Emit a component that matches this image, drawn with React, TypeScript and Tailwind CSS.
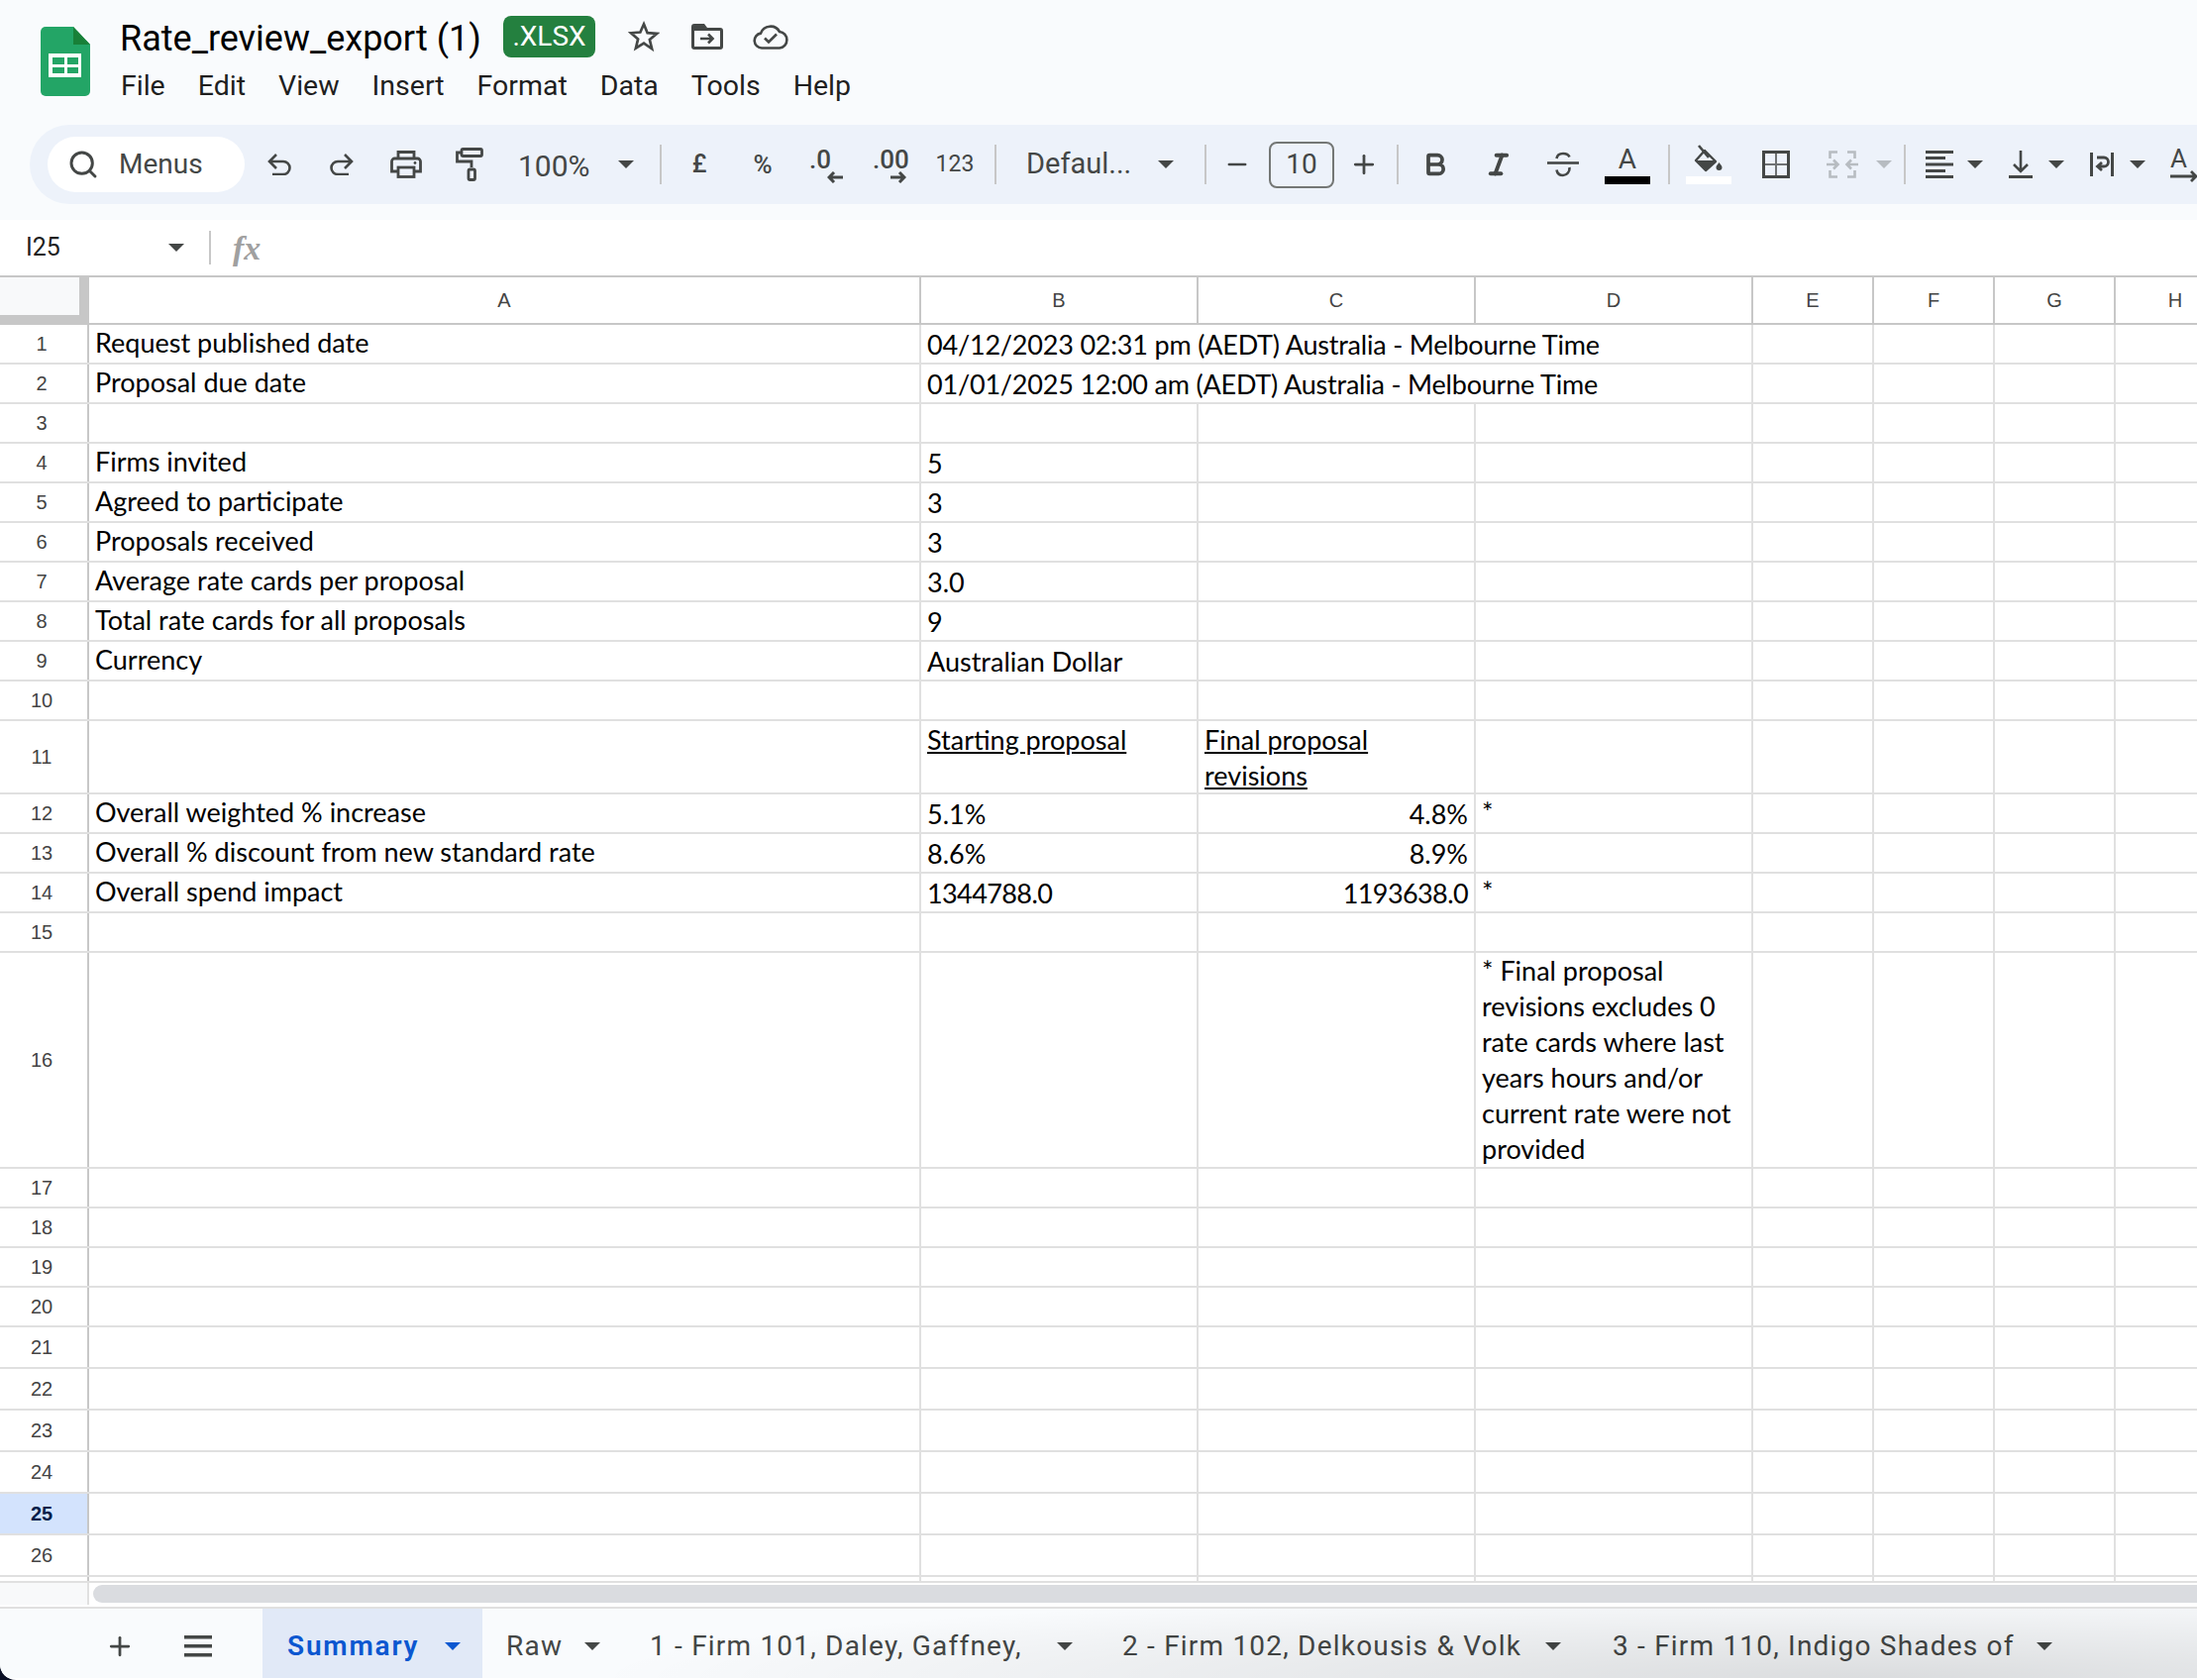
import React from 'react';
import { Bold, Italic, Minus, Plus, Search } from 'lucide-react';

const INK = '#444746';

const Caret = ({ color = INK }: { color?: string }) => (
  <svg width="16" height="8" viewBox="0 0 16 8" className="shrink-0">
    <path d="M0 0h16L8 8z" fill={color} />
  </svg>
);

const Sep = ({ className = '' }: { className?: string }) => (
  <div className={`w-[2px] h-[40px] bg-[#c7c7c7] shrink-0 ${className}`} />
);

const SheetsLogo = () => (
  <svg width="50" height="70" viewBox="0 0 50 70" className="shrink-0">
    <path d="M5 0H33L50 18V65a5 5 0 0 1-5 5H5a5 5 0 0 1-5-5V5a5 5 0 0 1 5-5z" fill="#23a566" />
    <path d="M33 0L50 18H33z" fill="#188038" />
    <rect x="8" y="27" width="33" height="24" fill="#fff" />
    <rect x="12" y="31" width="12" height="7" fill="#23a566" />
    <rect x="27" y="31" width="11" height="7" fill="#23a566" />
    <rect x="12" y="41" width="12" height="6" fill="#23a566" />
    <rect x="27" y="41" width="11" height="6" fill="#23a566" />
  </svg>
);

const StarIcon = () => (
  <svg width="32" height="32" viewBox="0 0 24 24" fill="none" stroke={INK} strokeWidth="2">
    <path d="M12 2.5l2.7 6.6 7.1.6-5.4 4.6 1.7 6.9L12 17l-6.1 3.7 1.7-6.9-5.4-4.6 7.1-.6z" />
  </svg>
);

const FolderIcon = () => (
  <svg width="32" height="26" viewBox="0 0 32 26">
    <path d="M3 0h10l3 4h13a3 3 0 0 1 3 3v16a3 3 0 0 1-3 3H3a3 3 0 0 1-3-3V3a3 3 0 0 1 3-3z" fill={INK} />
    <rect x="3" y="7" width="26" height="16" fill="#f9fbfd" />
    <path d="M9 15h12M17 10.5l4.5 4.5-4.5 4.5" fill="none" stroke={INK} strokeWidth="2.6" />
  </svg>
);

const CloudIcon = () => (
  <svg width="36" height="26" viewBox="0 0 36 26" fill="none" stroke={INK} strokeWidth="2.6">
    <path d="M9 24.5a7.5 7.5 0 0 1-1-14.9A10.5 10.5 0 0 1 27 8a8.3 8.3 0 0 1 0 16.5z" />
    <path d="M12 14.5l4 4 8-8" />
  </svg>
);

const UndoIcon = ({ flip = false }: { flip?: boolean }) => (
  <svg width="24" height="22" viewBox="0 0 24 22" fill="none" stroke={INK} strokeWidth="2.6" className={flip ? '-scale-x-100' : ''}>
    <path d="M9 1L2 8l7 7M2 8h14a6.5 6.5 0 0 1 0 13H5" />
  </svg>
);

const PrintIcon = () => (
  <svg width="32" height="28" viewBox="0 0 32 28" fill="none" stroke={INK} strokeWidth="2.8">
    <path d="M8 8V1.5h16V8M8 21H1.5V11a3 3 0 0 1 3-3h23a3 3 0 0 1 3 3v10H24" />
    <rect x="8" y="17" width="16" height="9.5" />
    <circle cx="25" cy="12.5" r="1.4" fill={INK} stroke="none" />
  </svg>
);

const RollerIcon = () => (
  <svg width="28" height="34" viewBox="0 0 28 34" fill="none" stroke={INK} strokeWidth="2.8">
    <rect x="6" y="1.5" width="20.5" height="7" rx="1.5" />
    <path d="M6 5H1.5v9H16v6" />
    <rect x="13" y="22" width="6.5" height="10.5" rx="1.5" />
  </svg>
);

const SmallArrow = ({ left = false }: { left?: boolean }) => (
  <svg width="16" height="12" viewBox="0 0 16 12" fill="none" stroke={INK} strokeWidth="3" className={left ? '-scale-x-100' : ''}>
    <path d="M0 6h14M9 1l5 5-5 5" />
  </svg>
);

const StrikeIcon = () => (
  <svg width="32" height="26" viewBox="0 0 32 26" fill="none" stroke={INK} strokeWidth="2.6">
    <path d="M0 11.5h32" />
    <path d="M9.5 7c.5-3.5 3.500-5 6.500-5s5.500 1 6.500 3.500M22.500 16c.5 4-2.500 8-6.500 8s-6-2.500-6.500-5.500" />
  </svg>
);

const FillIcon = () => (
  <svg width="30" height="30" viewBox="0 0 30 30">
    <path d="M5 1l10 12" fill="none" stroke={INK} strokeWidth="2.6" />
    <path d="M2 16L11 6l11 11-10 9z" fill="none" stroke={INK} strokeWidth="2.4" strokeLinejoin="round" />
    <path d="M2 16h20L12 26z" fill={INK} />
    <path d="M25.500 18c1.500 2 3 3.500 3 5a3 3 0 0 1-6 0c0-1.500 1.500-3 3-5z" fill={INK} />
  </svg>
);

const BordersIcon = () => (
  <svg width="28" height="28" viewBox="0 0 28 28" fill="none" stroke={INK}>
    <path d="M14 2v24M2 14h24" strokeWidth="2" opacity="0.75" />
    <rect x="1.500" y="1.500" width="25" height="25" strokeWidth="3" />
  </svg>
);

const MergeIcon = () => (
  <svg width="32" height="28" viewBox="0 0 32 28" fill="none" stroke="#b7bcc1" strokeWidth="2.6">
    <path d="M11 1.500H3.500V8M3.500 20v6.500H11M21 1.500h7.500V8M28.500 20v6.500H21" />
    <path d="M0 14h11M7 9.500l4.500 4.500L7 18.500M32 14H21M25 9.500L20.500 14l4.500 4.500" />
  </svg>
);

const AlignIcon = () => (
  <svg width="28" height="28" viewBox="0 0 28 28" fill={INK}>
    <rect width="28" height="3" />
    <rect y="6" width="20" height="3" />
    <rect y="12.500" width="28" height="3" />
    <rect y="19" width="20" height="3" />
    <rect y="25" width="28" height="3" />
  </svg>
);

const VAlignIcon = () => (
  <svg width="24" height="28" viewBox="0 0 24 28" fill="none" stroke={INK} strokeWidth="2.6">
    <path d="M12 0v21M5 14l7 7 7-7" />
    <path d="M0 26.500h24" strokeWidth="3" />
  </svg>
);

const WrapIcon = () => (
  <svg width="24" height="24" viewBox="0 0 24 24" fill="none" stroke={INK}>
    <path d="M1.500 0v24M22.500 0v24" strokeWidth="3" />
    <path d="M7 5h7a4 4 0 0 1 0 9H8M12 10l-4.500 4 4.500 4" strokeWidth="2.800" />
  </svg>
);

const Toolbar = () => (
  <div className="h-[80px] ml-[30px] pl-[18px] bg-[#edf2fa] rounded-l-[40px] flex items-center text-[#444746] font-['Roboto',sans-serif] whitespace-nowrap">
    <div className="w-[199px] h-[56px] bg-white rounded-[28px] flex items-center pl-[20px] shrink-0">
      <Search size={32} strokeWidth={2.2} color={INK} className="shrink-0" />
      <span className="ml-[20px] text-[28px]">Menus</span>
    </div>
    <div className="w-[64px] ml-[3px] flex justify-center shrink-0"><UndoIcon /></div>
    <div className="w-[62px] flex justify-center shrink-0"><UndoIcon flip /></div>
    <div className="w-[68px] flex justify-center shrink-0"><PrintIcon /></div>
    <div className="w-[60px] flex justify-center shrink-0"><RollerIcon /></div>
    <span className="w-[74px] ml-[19px] text-[30px] pt-[2px] shrink-0">100%</span>
    <div className="w-[70px] flex justify-center shrink-0"><Caret /></div>
    <Sep className="-ml-[1px]" />
    <div className="w-[76px] text-center text-[25px] font-medium shrink-0">£</div>
    <div className="w-[52px] text-center text-[26px] font-medium shrink-0">%</div>
    <div className="w-[74px] pl-[21px] shrink-0">
      <div className="w-[34px] flex flex-col">
        <span className="text-[26px] leading-[26px] font-medium">.0</span>
        <div className="self-end -mt-[1px]"><SmallArrow left /></div>
      </div>
    </div>
    <div className="w-[56px] pl-[11px] shrink-0">
      <div className="w-[34px] flex flex-col">
        <span className="text-[26px] leading-[26px] font-medium">.00</span>
        <div className="self-end -mt-[1px]"><SmallArrow /></div>
      </div>
    </div>
    <div className="w-[76px] text-center text-[23px] shrink-0">123</div>
    <Sep className="ml-[2px]" />
    <span className="w-[107px] ml-[30px] text-[29px] shrink-0">Defaul...</span>
    <div className="w-[68px] flex justify-center shrink-0"><Caret /></div>
    <Sep className="ml-[5px]" />
    <div className="w-[62px] flex justify-center shrink-0"><Minus size={28} strokeWidth={2.2} color={INK} /></div>
    <div className="w-[66px] h-[47px] ml-[1px] border-2 border-[#747775] rounded-[8px] flex items-center justify-center text-[28px] shrink-0">10</div>
    <div className="w-[60px] flex justify-center shrink-0"><Plus size={30} strokeWidth={2.2} color={INK} /></div>
    <Sep className="ml-[3px]" />
    <div className="w-[74px] flex justify-center shrink-0"><Bold size={28} strokeWidth={3.2} color={INK} /></div>
    <div className="w-[54px] flex justify-center shrink-0"><Italic size={28} strokeWidth={3.4} color={INK} /></div>
    <div className="w-[76px] flex justify-center shrink-0"><StrikeIcon /></div>
    <div className="w-[54px] flex flex-col items-center shrink-0">
      <span className="text-[28px] leading-[30px]">A</span>
      <div className="w-[46px] h-[8px] bg-black mt-[2px]" />
    </div>
    <Sep className="ml-[14px]" />
    <div className="w-[78px] flex flex-col items-center shrink-0">
      <FillIcon />
      <div className="w-[46px] h-[8px] bg-white mt-[2px]" />
    </div>
    <div className="w-[58px] flex justify-center shrink-0"><BordersIcon /></div>
    <div className="w-[68px] ml-[4px] flex justify-center shrink-0"><MergeIcon /></div>
    <Caret color="#b7bcc1" />
    <Sep className="ml-[12px]" />
    <div className="w-[40px] ml-[14px] flex justify-center shrink-0"><AlignIcon /></div>
    <div className="ml-[8px] shrink-0"><Caret /></div>
    <div className="w-[40px] ml-[18px] flex justify-center shrink-0"><VAlignIcon /></div>
    <div className="ml-[8px] shrink-0"><Caret /></div>
    <div className="w-[40px] ml-[18px] flex justify-center shrink-0"><WrapIcon /></div>
    <div className="ml-[8px] shrink-0"><Caret /></div>
    <div className="ml-[25px] flex flex-col shrink-0 w-[28px]">
      <span className="text-[26px] leading-[24px]">A</span>
      <svg width="28" height="12" viewBox="0 0 28 12" fill="none" stroke={INK} strokeWidth="2.8">
        <path d="M0 6h26M21 1l5 5-5 5" />
      </svg>
    </div>
  </div>
);

const columns = [
  { name: 'A', width: 'w-[840px]' },
  { name: 'B', width: 'w-[280px]' },
  { name: 'C', width: 'w-[280px]' },
  { name: 'D', width: 'w-[280px]' },
  { name: 'E', width: 'w-[122px]' },
  { name: 'F', width: 'w-[122px]' },
  { name: 'G', width: 'w-[122px]' },
  { name: 'H', width: 'w-[122px]' },
];

interface RowData {
  n: number;
  h?: string;
  a?: string;
  b?: React.ReactNode;
  c?: React.ReactNode;
  d?: React.ReactNode;
  cRight?: boolean;
  span?: boolean;
}

const rows: RowData[] = [
  { n: 1, a: 'Request published date', b: <span className="tracking-[-0.2px]">04/12/2023 02:31 pm (AEDT) Australia - Melbourne Time</span>, span: true },
  { n: 2, a: 'Proposal due date', b: <span className="tracking-[-0.2px]">01/01/2025 12:00 am (AEDT) Australia - Melbourne Time</span>, span: true },
  { n: 3 },
  { n: 4, a: 'Firms invited', b: '5' },
  { n: 5, a: 'Agreed to participate', b: '3' },
  { n: 6, a: 'Proposals received', b: '3' },
  { n: 7, a: 'Average rate cards per proposal', b: '3.0' },
  { n: 8, a: 'Total rate cards for all proposals', b: '9' },
  { n: 9, a: 'Currency', b: 'Australian Dollar' },
  { n: 10 },
  {
    n: 11,
    h: 'h-[74px]',
    b: <span className="underline underline-offset-2">Starting proposal</span>,
    c: <span className="underline underline-offset-2">Final proposal<br />revisions</span>,
  },
  { n: 12, a: 'Overall weighted % increase', b: '5.1%', c: '4.8%', cRight: true, d: '*' },
  { n: 13, a: 'Overall % discount from new standard rate', b: '8.6%', c: '8.9%', cRight: true },
  {
    n: 14,
    a: 'Overall spend impact',
    b: <span className="tracking-[-0.6px]">1344788.0</span>,
    c: <span className="tracking-[-0.6px]">1193638.0</span>,
    cRight: true,
    d: '*',
  },
  { n: 15 },
  {
    n: 16,
    h: 'h-[218px]',
    d: (
      <>
        * Final proposal<br />
        revisions excludes 0<br />
        rate cards where last<br />
        years hours and/or<br />
        current rate were not<br />
        provided
      </>
    ),
  },
  { n: 17 },
  { n: 18 },
  { n: 19 },
  { n: 20 },
  { n: 21, h: 'h-[42px]' },
  { n: 22, h: 'h-[42px]' },
  { n: 23, h: 'h-[42px]' },
  { n: 24, h: 'h-[42px]' },
  { n: 25, h: 'h-[42px]' },
  { n: 26, h: 'h-[42px]' },
];

const cellFont = "font-['Lato',sans-serif] text-[27px] leading-[36px] text-black whitespace-nowrap";

const GridRow = ({ row }: { row: RowData }) => {
  const active = row.n === 25;
  const numericPad = row.n === 11 ? 'pt-[1px]' : 'pt-[2px]';
  return (
    <div className={`flex shrink-0 border-b-2 border-[#e0e0e0] ${row.h ?? 'h-[40px]'}`}>
      <div
        className={`w-[90px] shrink-0 border-r-2 border-[#c7c7c7] flex items-center justify-center pr-[4px] pb-[1px] font-['Liberation_Sans',sans-serif] text-[20px] ${
          active ? 'bg-[#d3e3fd] font-bold text-[#041e49]' : 'text-[#444]'
        }`}
      >
        {row.n}
      </div>
      <div className={`w-[840px] shrink-0 border-r-2 border-[#e0e0e0] pl-[6px] ${cellFont}`}>{row.a}</div>
      <div className={`w-[280px] shrink-0 pl-[6px] ${numericPad} ${row.span ? '' : 'border-r-2 border-[#e0e0e0]'} ${cellFont}`}>{row.b}</div>
      <div className={`w-[280px] shrink-0 pl-[6px] pr-[6px] ${numericPad} ${row.span ? '' : 'border-r-2 border-[#e0e0e0]'} ${row.cRight ? 'text-right' : ''} ${cellFont}`}>{row.c}</div>
      <div className={`w-[280px] shrink-0 border-r-2 border-[#e0e0e0] pl-[6px] ${cellFont}`}>{row.d}</div>
      <div className="w-[122px] shrink-0 border-r-2 border-[#e0e0e0]" />
      <div className="w-[122px] shrink-0 border-r-2 border-[#e0e0e0]" />
      <div className="w-[122px] shrink-0 border-r-2 border-[#e0e0e0]" />
      <div className="w-[122px] shrink-0" />
    </div>
  );
};

const tabText = "font-['Roboto',sans-serif] text-[28px] tracking-[1.2px] whitespace-nowrap";

export default function App() {
  return (
    <div className="w-[2218px] h-[1696px] overflow-hidden bg-[#0b1026]">
      <div className="w-[2218px] h-[1696px] overflow-hidden bg-white rounded-bl-[16px] flex flex-col">
        {/* Title and menus */}
        <header className="h-[126px] shrink-0 bg-[#f9fbfd] pl-[41px] pt-[27px] flex">
          <SheetsLogo />
          <div className="ml-[30px] -mt-[11px]">
            <div className="h-[42px] flex items-center">
              <span className="font-['Roboto',sans-serif] text-[36px] pt-[4px] text-black w-[387px] whitespace-nowrap">Rate_review_export (1)</span>
              <span className="w-[93px] h-[42px] bg-[#24803f] rounded-[8px] flex items-center justify-center font-['Roboto',sans-serif] text-[28px] text-white">.XLSX</span>
              <div className="ml-[33px]"><StarIcon /></div>
              <div className="ml-[32px]"><FolderIcon /></div>
              <div className="ml-[30px]"><CloudIcon /></div>
            </div>
            <nav className="ml-[1px] mt-[9px] flex gap-[33px] font-['Roboto',sans-serif] text-[28.500px] leading-[40px] text-[#1f1f1f]">
              <span>File</span>
              <span>Edit</span>
              <span>View</span>
              <span>Insert</span>
              <span>Format</span>
              <span>Data</span>
              <span>Tools</span>
              <span>Help</span>
            </nav>
          </div>
        </header>

        <div className="h-[96px] shrink-0 bg-[#f9fbfd] pb-[16px] overflow-hidden">
          <Toolbar />
        </div>

        {/* Formula bar */}
        <div className="h-[56px] shrink-0 bg-white flex items-center">
          <span className="ml-[26px] w-[144px] font-['Roboto',sans-serif] text-[25px] text-[#1f1f1f]">I25</span>
          <Caret />
          <div className="ml-[25px] w-[2px] h-[34px] bg-[#c7c7c7]" />
          <span className="ml-[22px] font-['Liberation_Serif',serif] italic font-bold text-[34px] text-[#a0a0a0]">fx</span>
        </div>

        {/* Column headers */}
        <div className="h-[50px] shrink-0 flex border-y-2 border-[#c7c7c7]">
          <div className="w-[90px] shrink-0 bg-[#c7c7c7]">
            <div className="w-[80px] h-[38px] bg-[#f8f9fa]" />
          </div>
          {columns.map((col) => (
            <div
              key={col.name}
              className={`${col.width} shrink-0 border-r-2 border-[#c7c7c7] flex items-center justify-center font-['Liberation_Sans',sans-serif] text-[20px] text-[#444]`}
            >
              {col.name}
            </div>
          ))}
        </div>

        {/* Grid */}
        {rows.map((row) => (
          <GridRow key={row.n} row={row} />
        ))}
        <div className="h-[6px] shrink-0 flex border-b-2 border-[#e0e0e0]">
          <div className="w-[90px] shrink-0 border-r-2 border-[#c7c7c7]" />
          {columns.map((col) => (
            <div key={col.name} className={`${col.width} shrink-0 border-r-2 border-[#e0e0e0]`} />
          ))}
        </div>

        {/* Horizontal scrollbar */}
        <div className="h-[24px] shrink-0 flex">
          <div className="w-[90px] h-[22px] shrink-0 bg-[#f8f9fa] border-r-2 border-[#e0e0e0]" />
          <div className="ml-[4px] mt-[2px] flex-1 h-[18px] bg-[#dadce0] rounded-l-[9px]" />
        </div>

        {/* Sheet tabs */}
        <div className="relative h-[72px] shrink-0 bg-[#f9fbfd] border-t-2 border-[#e0e0e0] pt-[6px] flex items-center text-[#444746]">
          <div className="w-[242px] pl-[106px] flex items-center gap-[50px] shrink-0">
            <Plus size={30} strokeWidth={2.2} color={INK} />
            <svg width="28" height="22" viewBox="0 0 28 22" fill={INK}>
              <rect width="28" height="3.500" />
              <rect y="9" width="28" height="3.500" />
              <rect y="18" width="28" height="3.500" />
            </svg>
          </div>
          <div className="w-[222px] h-[70px] -mt-[6px] ml-[23px] pt-[6px] bg-[#e1e9f7] flex items-center pl-[25px] shrink-0 relative z-10">
            <span className="font-['Roboto',sans-serif] text-[28px] tracking-[1.8px] whitespace-nowrap font-semibold text-[#0b57d0]">Summary</span>
            <div className="ml-[26px]"><Caret color="#0b57d0" /></div>
          </div>
          <span className={`${tabText} ml-[24px] w-[79px] shrink-0`}>Raw</span>
          <Caret />
          <span className={`${tabText} ml-[50px] w-[379px] shrink-0`}>1 - Firm 101, Daley, Gaffney,</span>
          <div className="ml-[32px]"><Caret /></div>
          <span className={`${tabText} ml-[50px] w-[404px] shrink-0`}>2 - Firm 102, Delkousis &amp; Volk</span>
          <div className="ml-[23px]"><Caret /></div>
          <span className={`${tabText} ml-[52px] w-[405px] shrink-0`}>3 - Firm 110, Indigo Shades of</span>
          <div className="ml-[23px]"><Caret /></div>
          <div className="absolute inset-0 pointer-events-none bg-[radial-gradient(ellipse_1300px_90px_at_1900px_100%,rgba(0,0,0,0.12),transparent)]" />
        </div>
      </div>
    </div>
  );
}
